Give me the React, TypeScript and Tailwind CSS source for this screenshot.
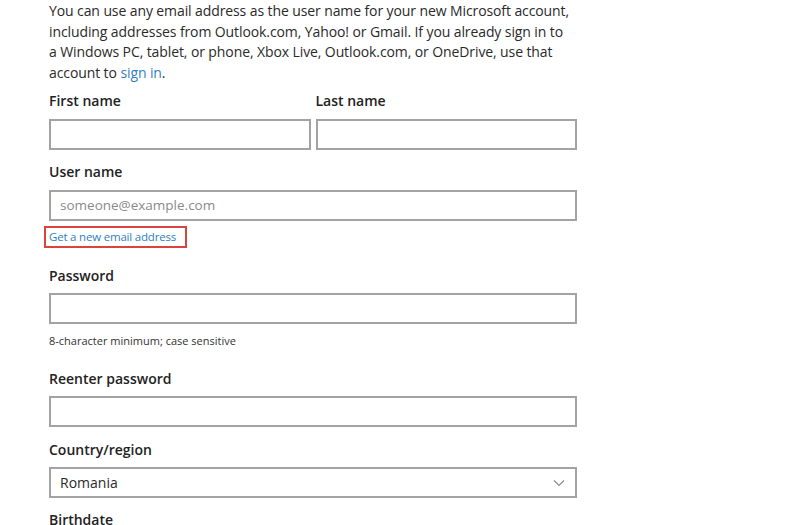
import React from "react";

const font = { fontFamily: '"Open Sans", "Noto Sans", sans-serif' };

function Label({ children, className = "" }: { children: React.ReactNode; className?: string }) {
  return (
    <div className={"text-[14px] font-semibold leading-[20px] text-[#222] " + className}>{children}</div>
  );
}

function Box({ children, className = "" }: { children?: React.ReactNode; className?: string }) {
  return (
    <div className={"h-[31px] border-2 border-[#a3a3a3] bg-white flex items-center px-[9px] " + className}>
      {children}
    </div>
  );
}

export default function App() {
  return (
    <div className="w-[810px] h-[525px] bg-white overflow-hidden" style={font}>
      <div className="ml-[49px] w-[528px] pt-[1px]">
        <p className="text-[14px] leading-[20.5px] text-[#2a2a2a] tracking-[-0.1px]">
          You can use any email address as the user name for your new Microsoft account,
          <br />
          including addresses from Outlook.com, Yahoo! or Gmail. If you already sign in to
          <br />
          a Windows PC, tablet, or phone, Xbox Live, Outlook.com, or OneDrive, use that
          <br />
          account to <span className="text-[#2f7fc4]">sign in</span>.
        </p>

        <div className="mt-[8px] flex gap-[5px]">
          <div className="flex-1">
            <Label>First name</Label>
            <Box className="mt-[8px]" />
          </div>
          <div className="flex-1">
            <Label>Last name</Label>
            <Box className="mt-[8px]" />
          </div>
        </div>

        <Label className="mt-[12px]">User name</Label>
        <Box className="mt-[8px]">
          <span className="text-[13.5px] text-[#8a8a8a]">someone@example.com</span>
        </Box>
        <div className="mt-[5px] -ml-[5px] w-[143px] h-[22px] border-2 border-[#d9443f] flex items-center pl-[3px]">
          <span className="text-[11.5px] text-[#2f7fc4] tracking-[-0.2px]">Get a new email address</span>
        </div>

        <Label className="mt-[18px]">Password</Label>
        <Box className="mt-[7px]" />
        <div className="mt-[10px] text-[11px] leading-[14px] text-[#333]">8-character minimum; case sensitive</div>

        <Label className="mt-[21px]">Reenter password</Label>
        <Box className="mt-[7px]" />

        <Label className="mt-[13px]">Country/region</Label>
        <Box className="mt-[7px] justify-between pl-[9px] pr-[10px]">
          <span className="text-[14px] text-[#2a2a2a]">Romania</span>
          <svg width="12" height="8" viewBox="0 0 12 8" fill="none">
            <path d="M1 1.5 L6 6.5 L11 1.5" stroke="#8a8a8a" strokeWidth="1.2" />
          </svg>
        </Box>

        <Label className="mt-[12px]">Birthdate</Label>
      </div>
    </div>
  );
}
